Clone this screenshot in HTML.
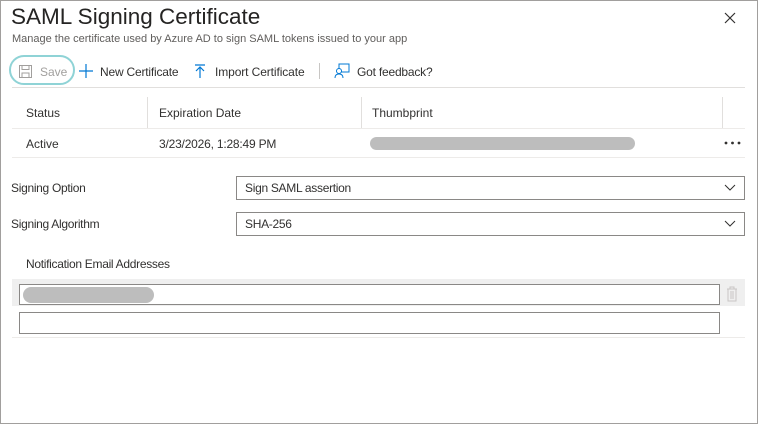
<!DOCTYPE html>
<html><head><style>
body{margin:0;width:758px;height:424px;overflow:hidden;font-family:"Liberation Sans",sans-serif;color:#323130;background:#fff}
.frame{position:absolute;left:0;top:0;width:756px;height:422px;border:1px solid #a19f9d}
.a{position:absolute;white-space:nowrap}
.t{font-size:12px}
.sel{position:absolute;left:236px;width:507px;height:22px;border:1px solid #8a8886;font-size:12px;line-height:22px;text-indent:8px}
.sel svg{position:absolute;right:8px;top:7px}
.inp{position:absolute;left:19px;width:699px;border:1px solid #8a8886;background:#fff}
.pill{position:absolute;background:#bdbdbd;border-radius:8px}
</style></head><body>
<div class="frame"></div>
<div class="a" style="left:11px;top:4px;font-size:22.5px;color:#252423">SAML Signing Certificate</div>
<div class="a" style="left:12px;top:33px;font-size:11px;color:#605e5c">Manage the certificate used by Azure AD to sign SAML tokens issued to your app</div>
<svg class="a" style="left:724px;top:12px" width="12" height="12"><path d="M1 1L11 11M11 1L1 11" stroke="#323130" stroke-width="1.2"/></svg>
<div class="a" style="left:9px;top:55px;width:66px;height:30px;border:2.5px solid #8fd3d6;border-radius:15px;box-sizing:border-box"></div>
<svg class="a" style="left:19px;top:65px" width="13" height="13"><rect x="0.5" y="0.5" width="12" height="12" fill="none" stroke="#a19f9d"/><rect x="3" y="0.5" width="7" height="4" fill="none" stroke="#a19f9d"/><rect x="3" y="8" width="7" height="4.5" fill="none" stroke="#a19f9d"/></svg>
<div class="a t" style="left:40px;top:65px;color:#a19f9d">Save</div>
<svg class="a" style="left:79px;top:64px" width="14" height="14"><path d="M7 0V14M0 7H14" stroke="#0078d4" stroke-width="1.2"/></svg>
<div class="a t" style="left:100px;top:65px;letter-spacing:-0.2px">New Certificate</div>
<svg class="a" style="left:194px;top:64px" width="12" height="14"><path d="M1 1H11M6 3V14M2 7L6 3L10 7" stroke="#0078d4" stroke-width="1.2" fill="none"/></svg>
<div class="a t" style="left:215px;top:65px;letter-spacing:-0.1px">Import Certificate</div>
<div class="a" style="left:319px;top:63px;width:1px;height:16px;background:#c8c6c4"></div>
<svg class="a" style="left:334px;top:63px" width="16" height="16"><rect x="5" y="1" width="10" height="8" fill="none" stroke="#0078d4"/><circle cx="5" cy="8" r="2.5" fill="#fff" stroke="#0078d4"/><path d="M1 15C1 12 3 11 5 11S9 12 9 15" fill="none" stroke="#0078d4"/></svg>
<div class="a t" style="left:357px;top:65px;letter-spacing:-0.2px">Got feedback?</div>
<div class="a" style="left:12px;top:87px;width:733px;height:1px;background:#e1dfdd"></div>
<div class="a t" style="left:26px;top:106px">Status</div>
<div class="a t" style="left:159px;top:106px">Expiration Date</div>
<div class="a t" style="left:372px;top:106px">Thumbprint</div>
<div class="a" style="left:147px;top:97px;width:1px;height:31px;background:#e1dfdd"></div>
<div class="a" style="left:361px;top:97px;width:1px;height:31px;background:#e1dfdd"></div>
<div class="a" style="left:722px;top:97px;width:1px;height:31px;background:#e1dfdd"></div>
<div class="a" style="left:12px;top:128px;width:733px;height:1px;background:#edebe9"></div>
<div class="a t" style="left:26px;top:137px">Active</div>
<div class="a t" style="left:159px;top:137px;letter-spacing:-0.2px">3/23/2026, 1:28:49 PM</div>
<div class="pill" style="left:370px;top:137px;width:265px;height:13px"></div>
<svg class="a" style="left:724px;top:141px" width="17" height="4"><circle cx="2" cy="2" r="1.4" fill="#323130"/><circle cx="8.5" cy="2" r="1.4" fill="#323130"/><circle cx="15" cy="2" r="1.4" fill="#323130"/></svg>
<div class="a" style="left:12px;top:157px;width:733px;height:1px;background:#edebe9"></div>
<div class="a t" style="left:11px;top:181px;letter-spacing:-0.3px">Signing Option</div>
<div class="sel" style="top:176px;letter-spacing:-0.3px">Sign SAML assertion<svg width="12" height="8"><path d="M1 1L6 6L11 1" stroke="#323130" fill="none"/></svg></div>
<div class="a t" style="left:11px;top:217px;letter-spacing:-0.3px">Signing Algorithm</div>
<div class="sel" style="top:212px;letter-spacing:-0.3px">SHA-256<svg width="12" height="8"><path d="M1 1L6 6L11 1" stroke="#323130" fill="none"/></svg></div>
<div class="a t" style="left:26px;top:257px;letter-spacing:-0.3px">Notification Email Addresses</div>
<div class="a" style="left:12px;top:279px;width:733px;height:27px;background:#efefef"></div>
<div class="inp" style="top:284px;height:19px"></div>
<div class="pill" style="left:23px;top:287px;width:131px;height:16px"></div>
<svg class="a" style="left:726px;top:286px" width="12" height="16"><path d="M1 3H11M4 3V1H8V3M2 3V15H10V3M5 5V13M7 5V13" stroke="#c8c6c4" fill="none"/></svg>
<div class="inp" style="top:312px;height:20px"></div>
<div class="a" style="left:12px;top:337px;width:733px;height:1px;background:#edebe9"></div>
</body></html>
